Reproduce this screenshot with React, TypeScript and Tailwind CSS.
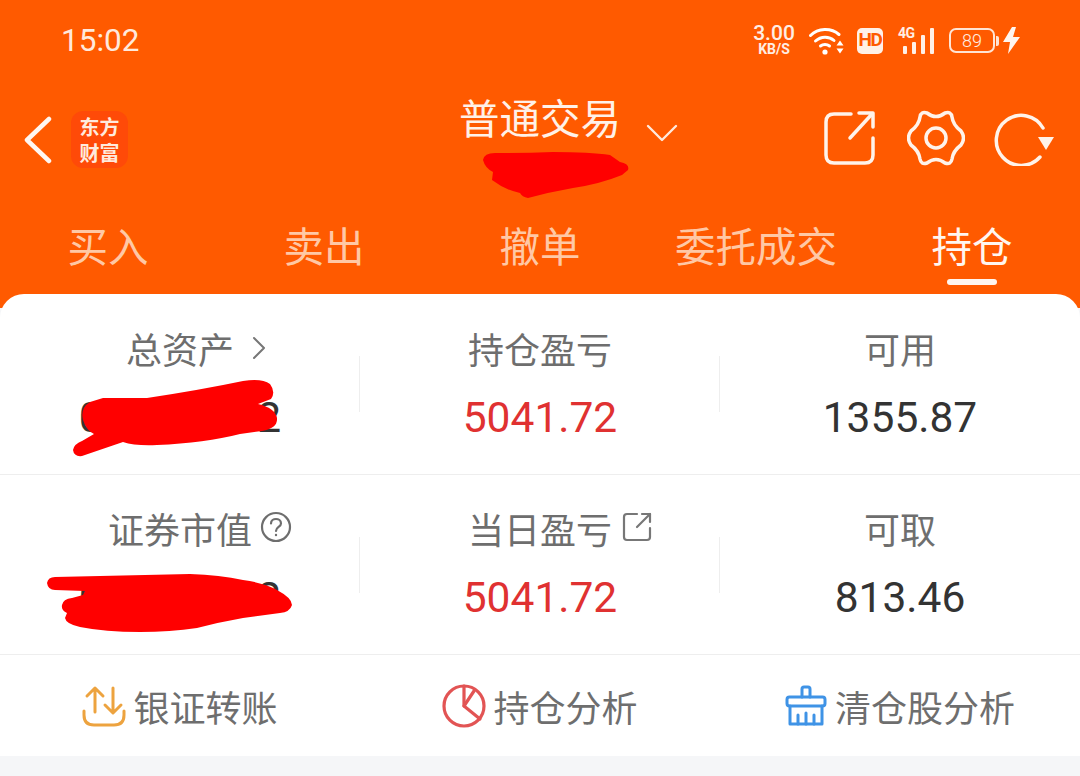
const tabs = ["买入", "卖出", "撤单", "委托成交", "持仓"];

function StatusBar() {
  return (
    <div className="flex h-[80px] items-center pl-[61px] pr-[59px] pt-[1px] text-white">
      <span className="font-['Roboto',sans-serif] text-[31.5px] leading-none text-[#ffe9dc]">15:02</span>
      <div className="ml-auto flex items-center">
        <div className="flex w-[44px] flex-col items-center font-['Roboto',sans-serif] font-medium leading-none text-[#ffeee4]">
          <span className="text-[21px] leading-[17px]">3.00</span>
          <span className="mt-[1px] text-[14px] leading-[13px] font-bold">KB/S</span>
        </div>
        <svg className="ml-[13px]" width="35" height="30" viewBox="0 0 35 30" fill="none" stroke="#fff" strokeWidth="3" strokeLinecap="round">
          <path d="M1.5 9.5 C9 2 22 1.5 30 8.5" />
          <path d="M6.5 15 C12 10 20 10 25 14.5" />
          <path d="M11.5 20 C14 18 18 18 20.5 20" />
          <circle cx="16" cy="26" r="2.6" fill="#fff" stroke="none" />
          <path d="M27.5 19.5 L31 14.5 L34.5 19.5Z M27.5 22.5 L31 27.5 L34.5 22.5Z" fill="#fff" stroke="none" />
        </svg>
        <div className="ml-[13px] flex h-[26px] w-[26px] items-center justify-center rounded-[5px] bg-[#fff1e8] font-['Roboto',sans-serif] text-[19px] font-bold tracking-[-1.5px] text-[#ff5a00]">
          HD
        </div>
        <div className="relative ml-[15px] h-[28px] w-[38px]">
          <span className="absolute left-0 top-[-1px] font-['Roboto',sans-serif] text-[14px] font-bold leading-[14px] tracking-[-0.5px] text-[#ffeee4]">4G</span>
          <svg className="absolute inset-0" width="38" height="28" viewBox="0 0 38 28" fill="#fff0e6">
            <rect x="5" y="19" width="4" height="8" rx="1" />
            <rect x="14" y="15" width="4" height="12" rx="1" />
            <rect x="23" y="8" width="4" height="19" rx="1" />
            <rect x="32" y="1" width="4" height="26" rx="1" />
          </svg>
        </div>
        <div className="ml-[13px] flex h-[25px] w-[46px] items-center justify-center rounded-[7px] border-2 border-[#ffe4d4] font-['Roboto',sans-serif] text-[18px] font-light leading-none text-[#ffeee4]">
          89
        </div>
        <div className="ml-[1px] h-[10px] w-[3px] rounded-r-[2px] bg-[#ffe4d4]" />
        <svg className="ml-[4px]" width="18" height="27" viewBox="0 0 18 27" fill="#fff6f0">
          <path d="M9 0 L0 15 H7 L5 27 L17 10 H10 L13 0Z" />
        </svg>
      </div>
    </div>
  );
}

function NavBar() {
  return (
    <div className="relative flex h-[105px] items-start justify-center">
      <div className="absolute left-[24px] top-[31px] flex items-center">
        <svg width="28" height="48" viewBox="0 0 28 48" fill="none" stroke="#fff6f0" strokeWidth="4.5" strokeLinecap="round" strokeLinejoin="round">
          <path d="M25 3 L3 24 L25 45" />
        </svg>
        <div className="ml-[19px] flex h-[57px] w-[57px] flex-col items-center justify-center rounded-[12px] bg-[#ff4a08] font-['Noto_Sans_CJK_SC',sans-serif] text-[20px] font-bold leading-[26px] text-[#ffeadd]">
          <span>东方</span>
          <span>财富</span>
        </div>
      </div>
      <div className="relative mt-[9px]">
        <span className="font-['Noto_Sans_CJK_SC',sans-serif] text-[40.5px] leading-[56px] text-[#fff1e8]">普通交易</span>
        <svg className="absolute left-[187px] top-[35px]" width="32" height="18" viewBox="0 0 32 18" fill="none" stroke="#ffe9dc" strokeWidth="2.4" strokeLinecap="round" strokeLinejoin="round">
          <path d="M2 2 L16 16 L30 2" />
        </svg>
      </div>
      <div className="absolute right-[26px] top-[30px] flex items-center">
        {/* share */}
        <svg width="52" height="56" viewBox="0 0 52 56" fill="none" stroke="#fff3ea" strokeWidth="3.5" strokeLinecap="round" strokeLinejoin="round">
          <path d="M27 4 H10 Q2 4 2 12 V45 Q2 53 10 53 H41 Q49 53 49 45 V28" />
          <path d="M26 28 L48 4" />
          <path d="M35 3 H49 V17" />
        </svg>
        {/* settings */}
        <svg className="ml-[31px]" width="58" height="56" viewBox="0 0 58 56" fill="none" stroke="#fff3ea" strokeWidth="3.5" strokeLinecap="round" strokeLinejoin="round">
          <path d="M20 3 Q29 10 38 3 Q44 1 45 7 Q46 15 54 21 Q59 28 54 35 Q46 41 45 49 Q44 55 38 53 Q29 46 20 53 Q14 55 13 49 Q12 41 4 35 Q-1 28 4 21 Q12 15 13 7 Q14 1 20 3Z" />
          <circle cx="29" cy="28" r="10" />
        </svg>
        {/* refresh */}
        <svg className="ml-[29px]" width="60" height="56" viewBox="0 0 60 56" fill="none" stroke="#fff3ea" strokeWidth="3.5" strokeLinecap="round">
          <path d="M49 18 A25 25 0 1 0 46 47" />
          <path d="M44 27 H60 L52 40Z" fill="#fff3ea" stroke="none" />
        </svg>
      </div>
    </div>
  );
}

function TabBar() {
  return (
    <div className="grid h-[109px] grid-cols-5 pt-[31px]">
      {tabs.map((t, i) => (
        <div key={t} className="relative flex justify-center">
          <span className={`whitespace-nowrap font-['Noto_Sans_CJK_SC',sans-serif] text-[40.5px] leading-[58px] ${i === 4 ? "text-[#fff6f0]" : "text-[#ffc8a5]"}`}>
            {t}
          </span>
          {i === 4 && <div className="absolute left-1/2 top-[63px] h-[6px] w-[50px] -translate-x-1/2 rounded-full bg-[#fff6f0]" />}
        </div>
      ))}
    </div>
  );
}

function StatCell({
  label,
  value,
  red,
  divider,
  lower,
  suffix,
}: {
  label: string;
  value: string;
  red?: boolean;
  divider?: boolean;
  lower?: boolean;
  suffix?: React.ReactNode;
}) {
  return (
    <div className={`relative flex h-full flex-col items-center ${lower ? "pt-[26px]" : "pt-[27px]"}`}>
      <div className="relative flex h-[54px] items-center font-['Noto_Sans_CJK_SC',sans-serif] text-[36px] leading-[54px] text-[#6e6e6e]">
        {label}
        {suffix && <div className="absolute left-full top-0 flex h-full items-center">{suffix}</div>}
      </div>
      <div className={`mt-[18px] font-['Roboto',sans-serif] text-[42.5px] leading-[50px] ${red ? "text-[#e03131]" : "text-[#333333]"}`}>
        {value}
      </div>
      {divider && <div className="absolute right-0 top-[62px] h-[56px] w-px bg-[#eeeeee]" />}
    </div>
  );
}

function FooterAction({ icon, label }: { icon: React.ReactNode; label: string }) {
  return (
    <div className="flex items-center justify-center">
      {icon}
      <span className="ml-[7px] font-['Noto_Sans_CJK_SC',sans-serif] text-[36px] leading-[52px] text-[#6e6e6e]">{label}</span>
    </div>
  );
}

export default function App() {
  return (
    <div className="relative h-[776px] w-[1080px] overflow-hidden bg-[#f5f6f8]">
      <div className="bg-[#ff5a00] pb-[14px]">
        <StatusBar />
        <NavBar />
        <TabBar />
      </div>

      <div className="relative -mt-[14px] rounded-t-[24px] bg-white">
        <div className="grid h-[181px] grid-cols-3 border-b border-[#eeeeee]">
          <StatCell
            label="总资产"
            value="000000.02"
            divider
            suffix={
              <svg className="ml-[17px]" width="16" height="24" viewBox="0 0 16 24" fill="none" stroke="#777777" strokeWidth="2" strokeLinecap="round" strokeLinejoin="round">
                <path d="M3 2 L13 12 L3 22" />
              </svg>
            }
          />
          <StatCell label="持仓盈亏" value="5041.72" red divider />
          <StatCell label="可用" value="1355.87" />
        </div>
        <div className="grid h-[180px] grid-cols-3 border-b border-[#eeeeee]">
          <StatCell
            label="证券市值"
            value="000000.02"
            divider
            lower
            suffix={
              <svg className="mb-[2px] ml-[8px]" width="32" height="32" viewBox="0 0 32 32" fill="none" stroke="#6e6e6e" strokeWidth="2.2" strokeLinecap="round">
                <circle cx="16" cy="16" r="14" />
                <path d="M11 12.5 C11 6.5 21 6.5 21 12.5 C21 16 16 16 16 20" />
                <circle cx="16" cy="24" r="1.2" fill="#6e6e6e" stroke="none" />
              </svg>
            }
          />
          <StatCell
            label="当日盈亏"
            value="5041.72"
            red
            divider
            lower
            suffix={
              <svg className="mb-[3px] ml-[10px]" width="30" height="30" viewBox="0 0 30 30" fill="none" stroke="#777777" strokeWidth="2.2" strokeLinecap="round" strokeLinejoin="round">
                <path d="M15 2 H5 Q2 2 2 5 V25 Q2 28 5 28 H25 Q28 28 28 25 V16" />
                <path d="M15 15 L28 2" />
                <path d="M20 2 H28 V10" />
              </svg>
            }
          />
          <StatCell label="可取" value="813.46" lower />
        </div>
        <div className="grid h-[101px] grid-cols-3">
          <FooterAction
            label="银证转账"
            icon={
              <svg width="44" height="42" viewBox="0 0 44 42" fill="none" stroke="#eda33f" strokeWidth="3" strokeLinecap="round" strokeLinejoin="round">
                <path d="M2 26 V30 Q2 40 12 40 H32 Q42 40 42 30 V26" />
                <path d="M13 27 V3 M5 11 L13 3 L21 11" />
                <path d="M31 3 V27 M23 20 L31 28 L39 20" />
              </svg>
            }
          />
          <FooterAction
            label="持仓分析"
            icon={
              <svg width="44" height="44" viewBox="0 0 44 44" fill="none" stroke="#e25454" strokeWidth="3.2" strokeLinecap="round" strokeLinejoin="round">
                <circle cx="22" cy="22" r="20" />
                <path d="M22 2 V22 L38 35" />
                <path d="M22 22 L32 7" />
              </svg>
            }
          />
          <div className="flex items-center justify-center">
            <svg width="42" height="42" viewBox="0 0 42 42" fill="none" stroke="#3f93e6" strokeWidth="3" strokeLinecap="round" strokeLinejoin="round">
              <path d="M17 12 V4 Q17 2 19 2 H23 Q25 2 25 4 V12" />
              <rect x="2" y="12" width="38" height="9" rx="2.5" />
              <path d="M5 21 V39 H37 V21" />
              <path d="M13 39 V30 M21 39 V28 M29 39 V30" />
            </svg>
            <span className="ml-[8px] font-['Noto_Sans_CJK_SC',sans-serif] text-[36px] leading-[52px] text-[#6e6e6e]">清仓股分析</span>
          </div>
        </div>
      </div>

      {/* red marker scribbles drawn over the screenshot */}
      <svg className="pointer-events-none absolute inset-0" width="1080" height="776" viewBox="0 0 1080 776" fill="#ff0000">
        <path d="M483 160 Q484 153 495 153 Q525 153 553 152 Q590 152 610 155 L620 162 Q630 164 628 170 L622 175 Q600 184 573 188 Q550 192 528 198 Q522 197 520 193 Q505 190 492 180 L493 172 Q485 168 483 160Z" />
        <path d="M73 450 Q74 444 82 441 L94 434 Q86 430 83 420 Q80 408 90 402 L103 398 L147 398 Q200 390 243 381 Q262 378 270 384 Q276 392 271 399 L258 404 Q275 408 277 418 Q278 428 262 431 L240 434 Q205 443 157 445 Q135 446 123 442 L82 456 Q74 457 73 450Z" />
        <path d="M47 583 Q48 577 55 577 L190 574 Q220 575 243 580 Q265 583 277 590 Q292 598 292 605 Q290 612 280 613 L243 618 Q220 622 197 628 Q170 632 140 632 Q105 632 80 627 Q66 624 65 618 L67 613 Q61 610 62 605 Q63 599 72 598 L83 595 L85 591 L55 590 Q48 590 47 583Z" />
      </svg>
    </div>
  );
}
